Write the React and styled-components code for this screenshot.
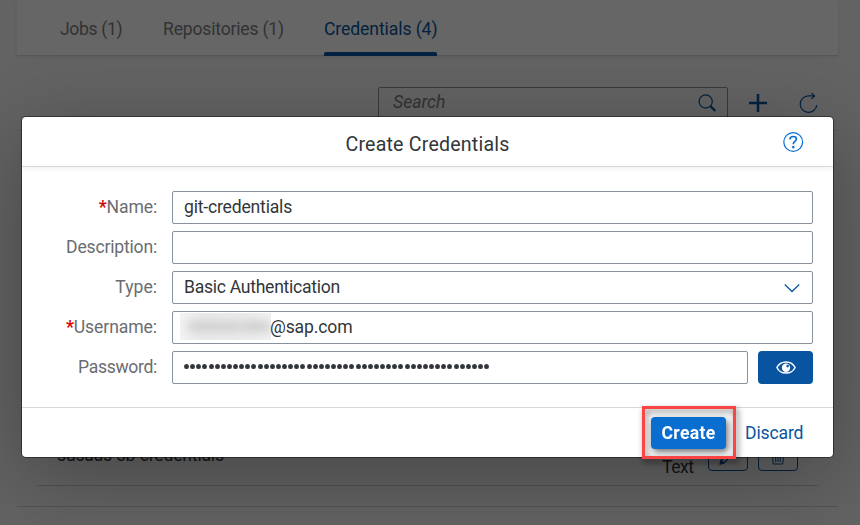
import React from "react";
import styled, { createGlobalStyle } from "styled-components";

const Global = createGlobalStyle`
  * { box-sizing: border-box; }
  body { margin: 0; overflow: hidden; font-family: Roboto, "Liberation Sans", sans-serif; font-size: 17.6px; color: #32363a; }
  button { font: inherit; padding: 0; margin: 0; border: 0; background: none; }
`;

const Page = styled.div`
  position: relative;
  width: 860px;
  height: 525px;
  overflow: hidden;
  background: #f7f7f7;
  padding: 0 22px 0 17px;
`;
const TabBar = styled.nav`
  display: flex;
  gap: 40px;
  height: 55px;
  padding-left: 43px;
  background: #fff;
  box-shadow: 0 1px 0 #dadada, 0 2px 4px rgba(0, 0, 0, 0.08);
`;
const Tab = styled.div`
  height: 56px;
  padding-top: 18px;
  line-height: 22px;
  width: ${(p) => p.$width}px;
  white-space: nowrap;
  letter-spacing: ${(p) => p.$track || 0}px;
  color: ${(p) => (p.$active ? "#0854a0" : "#7c8083")};
  &::after {
    content: "";
    display: ${(p) => (p.$active ? "block" : "none")};
    height: 4px;
    margin-top: 12px;
    border-radius: 2px 2px 0 0;
    background: #0854a0;
  }
`;
const Toolbar = styled.div`
  display: flex;
  align-items: center;
  height: 75px;
  padding: 20px 20px 0 361px;
`;
const Search = styled.div`
  display: flex;
  justify-content: space-between;
  width: 350px;
  height: 33px;
  flex: none;
  margin-top: 2px;
  padding: 3px 10px 0 14px;
  border: 1px solid #89919a;
  border-radius: 2px;
  font-style: italic;
  line-height: 22px;
  color: #7c8083;
`;
const ToolIcon = styled.span`
  display: flex;
  flex: none;
  color: #0854a0;
  margin-left: ${(p) => p.$gap || 0}px;
  margin-top: ${(p) => p.$drop || 0}px;
`;
const Card = styled.section`
  height: 377px;
  padding: 0 20px 20px;
  border-top: 1px solid #dcdcdc;
  border-bottom: 1px solid #cfcfcf;
  display: flex;
  align-items: flex-end;
`;
const Row = styled.div`
  display: flex;
  align-items: flex-end;
  width: 100%;
  height: 66px;
  border-bottom: 1px solid #cfcfcf;
  background: #fafafa;
  padding: 0 20px 14px;
`;
const RowName = styled.div`
  flex: 1;
  line-height: 22px;
  margin-bottom: 5px;
  letter-spacing: -0.2px;
`;
const RowType = styled.div`
  width: 46px;
  line-height: 22px;
  margin-bottom: -7px;
  letter-spacing: -0.5px;
`;
const RowButton = styled.button`
  display: flex;
  align-items: flex-end;
  justify-content: center;
  width: 40px;
  height: 33px;
  margin-left: ${(p) => p.$gap || 0}px;
  padding-bottom: 5px;
  border: 1px solid #0854a0;
  border-radius: 4px;
  color: #0854a0;
`;
const Overlay = styled.div`
  position: absolute;
  inset: 0;
  padding: 117px 27px 0 22px;
  background: rgba(0, 0, 0, 0.6);
`;
const Dialog = styled.div`
  height: 340px;
  border-radius: 4px;
  background: #fff;
  box-shadow: 0 0 0 1px rgba(0, 0, 0, 0.42), 0 20px 80px rgba(0, 0, 0, 0.3);
`;
const Header = styled.header`
  display: grid;
  grid-template-columns: 50px 1fr 50px;
  height: 50px;
  border-bottom: 1px solid #d9d9d9;
  border-radius: 4px 4px 0 0;
  box-shadow: 0 2px 4px rgba(0, 0, 0, 0.06);
`;
const Title = styled.h1`
  margin: 15px 0 0;
  text-align: center;
  font-size: 19.6px;
  line-height: 26px;
  font-weight: 400;
  letter-spacing: 0.2px;
`;
const Help = styled.button`
  display: flex;
  align-items: flex-start;
  padding-top: 15px;
  color: #0a6ed1;
`;
const Form = styled.div`
  display: grid;
  gap: 7px;
  height: 240px;
  align-content: start;
  padding: 24px 20px 0 0;
`;
const Field = styled.div`
  display: flex;
  height: 33px;
`;
const Label = styled.label`
  width: 135px;
  margin-right: 15px;
  padding-top: 5px;
  text-align: right;
  line-height: 22px;
  color: #6a6d70;
  white-space: nowrap;
  letter-spacing: ${(p) => p.$track || 0}px;
`;
const Required = styled.span`
  color: #d20a0a;
  font-weight: 700;
`;
const Input = styled.div`
  flex: 1;
  display: flex;
  align-items: flex-start;
  height: 33px;
  padding: 4px 12px 0 11px;
  border: 1px solid #89919a;
  border-radius: 2px;
  line-height: 22px;
  white-space: nowrap;
  letter-spacing: ${(p) => p.$track || 0}px;
`;
const Redacted = styled.span`
  width: 91px;
  height: 27px;
  margin: -3px -1px 0 -4px;
  overflow: hidden;
  background: linear-gradient(90deg, #f3f3f3, #eaeaea 25%, #ececec 80%, #f1f1f1);
  &::before {
    content: "";
    display: block;
    width: 82px;
    height: 9px;
    margin: 9px 0 0 8px;
    background: linear-gradient(90deg, #ccc 0 60%, #d7d7d7 64%, #cacaca 72%);
    filter: blur(5px);
  }
`;
const Select = styled(Input)`
  justify-content: space-between;
`;
const Dots = styled.div`
  display: flex;
  gap: 1.14px;
  margin-top: 7.5px;
`;
const Dot = styled.i`
  width: 5px;
  height: 5.6px;
  border-radius: 50%;
  background: #32363a;
`;
const Reveal = styled.button`
  display: grid;
  place-items: center;
  width: 55px;
  height: 33px;
  margin-left: 10px;
  border-radius: 4px;
  background: #0854a0;
  color: #fff;
`;
const Footer = styled.footer`
  display: flex;
  justify-content: flex-end;
  height: 50px;
  padding: 10px 29px 0 0;
  border-top: 1px solid #d9d9d9;
`;
const Marker = styled.div`
  width: 94px;
  height: 53px;
  margin: -12px 9px 0 0;
  padding: 8px 0 0 6px;
  border: 3px solid #fb4444;
  filter: drop-shadow(2px 3px 3px rgba(0, 0, 0, 0.55));
`;
const Primary = styled.button`
  width: 75px;
  height: 32px;
  border-radius: 4px;
  background: #0a6ed1;
  color: #fff;
  font-weight: 700;
  letter-spacing: 0.3px;
`;
const Discard = styled.button`
  width: 59px;
  height: 30px;
  color: #0854a0;
  text-align: left;
  white-space: nowrap;
  letter-spacing: -0.15px;
`;

const svg = { fill: "none", stroke: "currentColor" };

function SearchIcon() {
  return (
    <svg {...svg} width="19" height="19" viewBox="0 0 19 19">
      <circle cx="7.7" cy="7.5" r="6.6" strokeWidth="1.2" />
      <path d="M12.4 12.2 17.4 17" strokeWidth="2.3" />
    </svg>
  );
}
function PlusIcon() {
  return <svg {...svg} width="18" height="18" viewBox="0 0 18 18"><path d="M9 0v18M0 9h18" strokeWidth="2.5" /></svg>;
}
function RefreshIcon() {
  return (
    <svg {...svg} width="20" height="20" viewBox="0 0 20 20" strokeWidth="1.2">
      <path d="M17.8 12.1A8.3 8.3 0 1 1 9.5 2.8h5.8M12.3 0l3.3 2.9-3.3 3" />
    </svg>
  );
}
function HelpIcon() {
  return (
    <svg {...svg} width="21" height="21" viewBox="0 0 21 21">
      <circle cx="10.2" cy="10" r="9.4" strokeWidth="1.2" />
      <path d="M6.9 7.3C7.1 5.3 8.4 4.5 10.2 4.5s3.2 1 3.2 2.6c0 2.3-3 2.2-3 4.7v.4" strokeWidth="1.7" />
      <path d="M10.3 13.9v2.4" strokeWidth="2.2" />
    </svg>
  );
}
function ChevronIcon() {
  return <svg {...svg} width="16" height="24" viewBox="0 0 16 24"><path d="m.8 8.5 7.2 7 7.2-7" stroke="#0854a0" strokeWidth="1.3" /></svg>;
}
function EyeIcon() {
  return (
    <svg {...svg} width="20" height="14" viewBox="0 0 20 14">
      <path d="M.9 6.5C2.7 2.7 6 .9 10 .9S17.3 2.7 19.1 6.5c-1.8 3.8-5.1 5.6-9.1 5.6S2.7 10.3.9 6.5Z" strokeWidth="1.5" />
      <circle cx="10" cy="6.8" r="4.2" fill="currentColor" stroke="none" />
      <circle cx="11.6" cy="5.1" r="1.3" fill="#0854a0" stroke="none" />
    </svg>
  );
}
function PencilIcon() {
  return <svg {...svg} width="18" height="18" viewBox="0 0 18 18"><path d="m2.2 13.2-1 3.6 4-1.2L16 4.8 13 1.8Z" strokeWidth="1.3" /><path d="m2.2 13 3 3-4 1.2Z" fill="currentColor" /></svg>;
}
function TrashIcon() {
  return <svg {...svg} width="16" height="18" viewBox="0 0 16 18" strokeWidth="1"><path d="M1 4h14M5 4V1h6v3M2 4l1.2 13h9.6L14 4M5.5 6l.3 9M8 6v9M10.5 6l-.3 9" /></svg>;
}

export default function App() {
  return (
    <>
      <Global />
      <Page>
        <TabBar>
          <Tab $width={63} $track={-0.35}>Jobs (1)</Tab>
          <Tab $width={121} $track={-0.2}>Repositories (1)</Tab>
          <Tab $width={113} $track={-0.1} $active>Credentials (4)</Tab>
        </TabBar>
        <Toolbar>
          <Search>
            Search
            <ToolIcon $drop={3}><SearchIcon /></ToolIcon>
          </Search>
          <ToolIcon $gap={21}><PlusIcon /></ToolIcon>
          <ToolIcon $gap={32}><RefreshIcon /></ToolIcon>
        </Toolbar>
        <Card>
          <Row>
            <RowName>susaas-sb-credentials</RowName>
            <RowType>Text</RowType>
            <RowButton><PencilIcon /></RowButton>
            <RowButton $gap={10}><TrashIcon /></RowButton>
          </Row>
        </Card>
        <Overlay>
          <Dialog>
            <Header>
              <span />
              <Title>Create Credentials</Title>
              <Help><HelpIcon /></Help>
            </Header>
            <Form>
              <Field><Label $track={-0.15}><Required>*</Required>Name:</Label><Input $track={-0.2}>git-credentials</Input></Field>
              <Field><Label $track={-0.2}>Description:</Label><Input /></Field>
              <Field><Label>Type:</Label><Select $track={-0.29}>Basic Authentication<ChevronIcon /></Select></Field>
              <Field><Label $track={-0.1}><Required>*</Required>Username:</Label><Input $track={-0.15}><Redacted />@sap.com</Input></Field>
              <Field>
                <Label $track={-0.33}>Password:</Label>
                <Input><Dots>{Array.from({ length: 50 }, (_, i) => <Dot key={i} />)}</Dots></Input>
                <Reveal><EyeIcon /></Reveal>
              </Field>
            </Form>
            <Footer>
              <Marker><Primary>Create</Primary></Marker>
              <Discard>Discard</Discard>
            </Footer>
          </Dialog>
        </Overlay>
      </Page>
    </>
  );
}
